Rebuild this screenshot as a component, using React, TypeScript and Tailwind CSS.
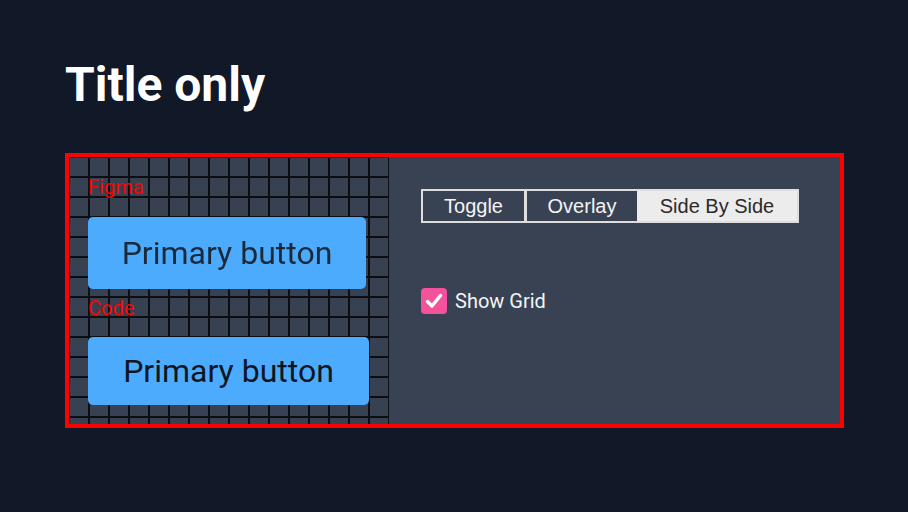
import React from "react";

export default function App() {
  return (
    <div className="min-h-[512px] w-[908px] bg-[#111827] pl-[65px] pt-[61px] font-['Roboto',sans-serif]">
      <h1 className="text-[48px] leading-[48px] font-bold text-white">Title only</h1>
      <div className="mt-[44px] flex h-[275px] w-[779px] border-4 border-[#ff0000] bg-[#394253]">
        <div className="flex w-[320px] shrink-0 flex-col pl-[19px] pt-[20px] bg-[#384151] bg-[linear-gradient(to_right,#0c0e13_2px,transparent_2px),linear-gradient(to_bottom,#0c0e13_2px,transparent_2px)] bg-[size:20px_20px] bg-[position:-1px_-1px]">
          <div className="text-[20px] leading-[20px] text-[#ff0000]">Figma</div>
          <div className="mt-[20px] flex h-[72px] w-[278px] items-center justify-center rounded-[5px] bg-[#4dabfe]">
            <span className="text-[32px] text-[#1b2a3a] blur-[0.6px]">Primary button</span>
          </div>
          <div className="mt-[9px] text-[20px] leading-[20px] text-[#ff0000]">Code</div>
          <div className="mt-[19px] flex h-[68px] w-[281px] items-center justify-center rounded-[5px] bg-[#4dabfe]">
            <span className="text-[32px] text-[#0f1622]">Primary button</span>
          </div>
        </div>
        <div className="flex flex-1 flex-col pl-[32px] pt-[32px]">
          <div className="flex h-[34px] w-fit border-2 border-[#dedede] font-['Liberation_Sans',sans-serif] text-[20px]">
            <div className="flex w-[101px] shrink-0 items-center justify-center text-[#f3f4f6]">Toggle</div>
            <div className="flex w-[113px] shrink-0 items-center justify-center border-l-[3px] border-[#dedede] text-[#f3f4f6]">Overlay</div>
            <div className="flex w-[160px] shrink-0 items-center justify-center bg-[#ececec] text-[#2a2a2a]">Side By Side</div>
          </div>
          <label className="mt-[63px] flex items-center gap-[8px]">
            <span className="flex h-[26px] w-[26px] items-center justify-center rounded-[4px] bg-[#f4529c]">
              <svg width="20" height="20" viewBox="0 0 20 20">
                <polyline points="3.5,10.5 8,15 16.5,4.5" fill="none" stroke="white" strokeWidth="3.4" strokeLinecap="round" strokeLinejoin="round" />
              </svg>
            </span>
            <span className="text-[20px] text-[#f3f4f6]">Show Grid</span>
          </label>
        </div>
      </div>
    </div>
  );
}
